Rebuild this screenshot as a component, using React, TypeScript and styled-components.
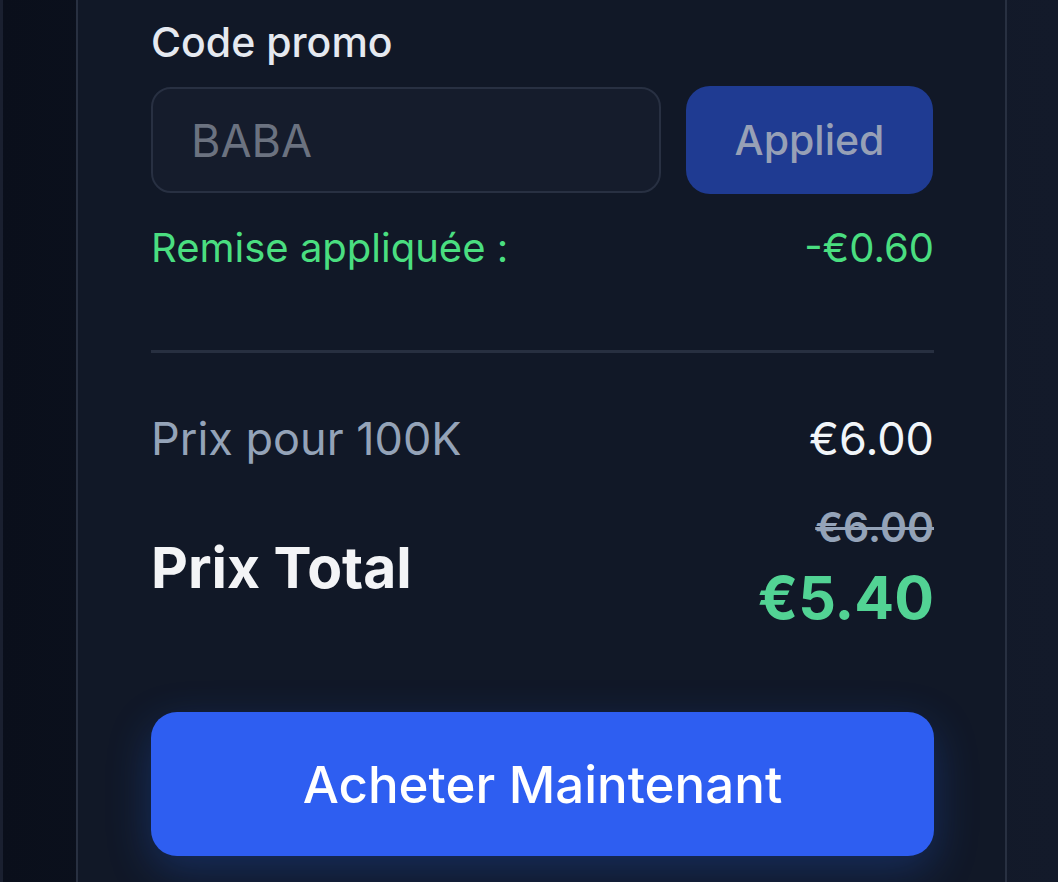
import React from "react";
import styled, { createGlobalStyle } from "styled-components";

const GlobalStyle = createGlobalStyle`
  html, body {
    margin: 0;
    padding: 0;
    height: 100%;
    overflow: hidden;
  }
  body {
    background: linear-gradient(90deg, #0a0f1b 0%, #0f1524 50%, #131a2a 100%);
    font-family: Inter, "Noto Sans", sans-serif;
    -webkit-font-smoothing: antialiased;
  }
  * { box-sizing: border-box; }
`;

const Page = styled.div`
  display: flex;
  min-height: 882px;
  border-left: 3px solid #1a2030;
  padding: 0 0 0 73px;
`;

const Card = styled.section`
  flex: none;
  width: 931px;
  min-width: 0;
  display: flex;
  flex-direction: column;
  align-self: flex-start;
  background: #111827;
  border: 2px solid #283041;
  border-top: 0;
  border-radius: 0 0 40px 40px;
  padding: 18px 71px 63px 73px;
`;

const Label = styled.label`
  display: block;
  color: #e5e9f0;
  font-size: 41px;
  line-height: 48px;
  font-weight: 500;
  margin-bottom: 20px;
`;

const PromoRow = styled.div`
  display: flex;
  align-items: center;
  gap: 25px;
  height: 108px;
`;

const PromoInput = styled.input`
  flex: none;
  width: 510px;
  min-width: 0;
  height: 106px;
  background: #151c2c;
  border: 2px solid #283042;
  border-radius: 20px;
  padding: 0 38px;
  font-family: inherit;
  font-size: 45px;
  color: #6b7280;
  outline: none;
  &::placeholder { color: #6b7280; }
`;

const AppliedButton = styled.button`
  flex: none;
  width: 247px;
  height: 108px;
  border: 0;
  border-radius: 24px;
  background: #1f3b92;
  color: #97a0b6;
  font-family: inherit;
  font-size: 41px;
  font-weight: 500;
  cursor: default;
`;

const Row = styled.div<{ $top: number }>`
  display: flex;
  justify-content: space-between;
  align-items: center;
  margin-top: ${(p) => p.$top}px;
`;

const Text = styled.span<{ $size: number; $color: string; $weight?: number; $lh: number }>`
  font-size: ${(p) => p.$size}px;
  line-height: ${(p) => p.$lh}px;
  color: ${(p) => p.$color};
  font-weight: ${(p) => p.$weight ?? 400};
`;

const Divider = styled.hr`
  border: 0;
  height: 3px;
  background: #272f40;
  margin: 78px 0 0;
`;

const PriceColumn = styled.div`
  display: flex;
  flex-direction: column;
  align-items: flex-end;
  gap: 13px;
`;

const Struck = styled.span`
  font-size: 41px;
  line-height: 48px;
  font-weight: 600;
  color: #94a3b8;
  text-decoration: line-through;
  text-decoration-thickness: 3px;
`;

const BuyButton = styled.button`
  margin-top: 80px;
  height: 144px;
  border: 0;
  border-radius: 26px;
  background: #2e5ef1;
  color: #ffffff;
  font-family: inherit;
  font-size: 51px;
  font-weight: 500;
  box-shadow: 0 14px 44px rgba(37, 99, 235, 0.28);
  cursor: pointer;
`;

export default function App() {
  return (
    <>
      <GlobalStyle />
      <Page>
        <Card>
          <Label htmlFor="promo">Code promo</Label>
          <PromoRow>
            <PromoInput id="promo" defaultValue="BABA" readOnly />
            <AppliedButton>Applied</AppliedButton>
          </PromoRow>
          <Row $top={30}>
            <Text $size={40} $lh={48} $color="#4ade80">Remise appliquée :</Text>
            <Text $size={40} $lh={48} $color="#4ade80">-€0.60</Text>
          </Row>
          <Divider />
          <Row $top={58}>
            <Text $size={45} $lh={56} $color="#94a3b8">Prix pour 100K</Text>
            <Text $size={45} $lh={56} $color="#f1f5f9">€6.00</Text>
          </Row>
          <Row $top={36}>
            <Text $size={57} $lh={68} $color="#f3f4f6" $weight={700}>Prix Total</Text>
            <PriceColumn>
              <Struck>€6.00</Struck>
              <Text $size={59} $lh={68} $color="#52d394" $weight={700}>€5.40</Text>
            </PriceColumn>
          </Row>
          <BuyButton>Acheter Maintenant</BuyButton>
        </Card>
      </Page>
    </>
  );
}
